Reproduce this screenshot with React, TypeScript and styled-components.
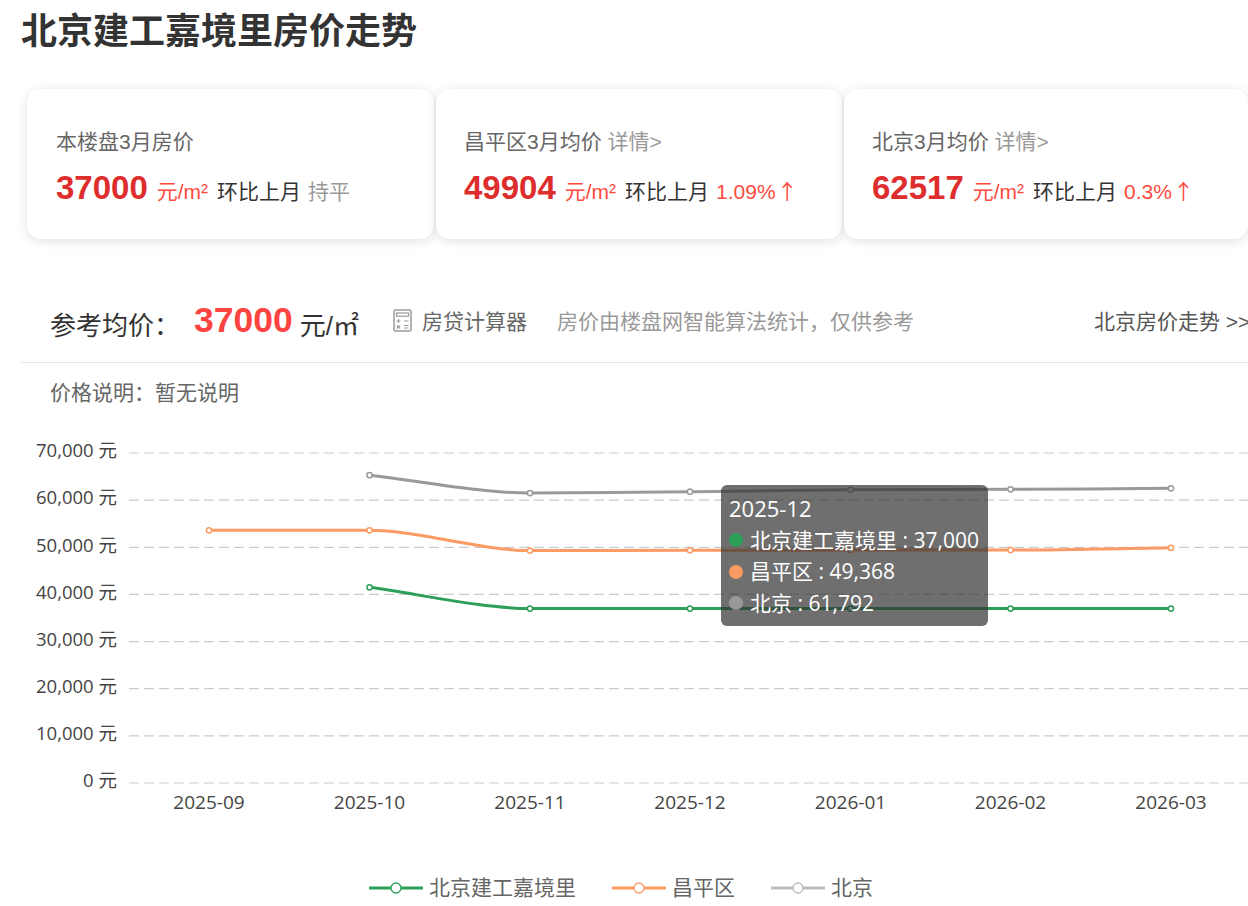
import React from "react";
import styled, { createGlobalStyle } from "styled-components";

const Global = createGlobalStyle`
  html, body { margin: 0; padding: 0; background: #fff; overflow: hidden; }
  body { font-family: "Liberation Sans", "Noto Sans CJK SC", sans-serif; }
  #root { width: 1248px; height: 906px; overflow: hidden; }
`;

const Page = styled.div`
  width: 1248px;
  height: 906px;
  overflow: hidden;
  padding-left: 21px;
  box-sizing: border-box;
`;
const Title = styled.h1`
  margin: 0;
  height: 62px;
  font-size: 36px;
  line-height: 63px;
  font-weight: 700;
  color: #333;
  white-space: nowrap;
`;
const Cards = styled.div`
  display: flex;
  gap: 2px;
  margin: 27px 0 0 6px;
  width: 1240px;
`;
const Card = styled.div<{ $w: number; $pad: number }>`
  flex: 0 0 ${(p) => p.$w}px;
  height: 150px;
  box-sizing: border-box;
  padding: 38px 0 0 ${(p) => p.$pad}px;
  background: #fff;
  border-radius: 14px;
  box-shadow: 0 2px 12px rgba(0, 0, 0, 0.12);
`;
const CardLabel = styled.div`
  font-size: 21px;
  line-height: 30px;
  color: #666;
  white-space: nowrap;
`;
const Detail = styled.span`
  color: #999;
`;
const CardValues = styled.div`
  display: flex;
  align-items: baseline;
  margin-top: 11px;
  white-space: nowrap;
`;
const Price = styled.span`
  font-size: 33px;
  line-height: 40px;
  font-weight: 700;
  color: #dd2d2d;
`;
const Unit = styled.span`
  font-size: 21px;
  color: #fd4a40;
  margin: 0 9px;
`;
const Compare = styled.span`
  font-size: 21px;
  color: #333;
`;
const Change = styled.span<{ $up?: boolean }>`
  font-size: 21px;
  margin-left: 7px;
  color: ${(p) => (p.$up ? "#fd4a40" : "#999")};
`;
const Arrow = styled.span`
  font-family: "Noto Sans CJK SC", sans-serif;
  font-size: 21px;
  margin-left: 1px;
`;

const Head = styled.div`
  display: flex;
  align-items: center;
  height: 86px;
  margin-top: 38px;
  padding: 3px 0 0 29px;
  width: 1260px;
  box-sizing: border-box;
  border-bottom: 1px solid #e6e6e6;
  white-space: nowrap;
`;
const RefLabel = styled.span`
  font-size: 26px;
  color: #333;
  margin-top: 4px;
`;
const RefPrice = styled.span`
  font-size: 35.5px;
  font-weight: 700;
  color: #fd4440;
  margin: -1px 0 0 14px;
`;
const RefUnit = styled.span`
  font-size: 26px;
  color: #333;
  margin: 4px 0 0 7px;
`;
const Calc = styled.span`
  display: inline-flex;
  align-items: center;
  margin: -2px 0 0 34px;
  font-size: 21px;
  color: #666;
  gap: 10px;
`;
const Note = styled.span`
  font-size: 21px;
  color: #999;
  margin: -2px 0 0 30px;
`;
const TrendLink = styled.span`
  font-size: 21px;
  color: #555;
  margin: -2px 0 0 180px;
`;
const Explain = styled.div`
  padding: 15px 0 0 29px;
  font-size: 21px;
  line-height: 30px;
  color: #666;
`;

const ChartWrap = styled.div`
  position: relative;
  width: 1248px;
  height: 420px;
  margin: 0 0 0 -21px;
`;
const ChartSvg = styled.svg`
  display: block;
  width: 1248px;
  height: 420px;
  font-family: "Open Sans", "Noto Sans CJK SC", sans-serif;
`;
const Tooltip = styled.div`
  position: absolute;
  left: 721px;
  top: 77px;
  width: 267px;
  height: 141px;
  box-sizing: border-box;
  padding: 8px 0 0 8px;
  border-radius: 6px;
  background: rgba(50, 50, 50, 0.7);
  color: #fff;
  font: 21px/31.5px "Open Sans", "Noto Sans CJK SC", sans-serif;
  white-space: nowrap;
`;
const TipDate = styled.div`
  font-size: 22px;
`;
const TipRow = styled.div`
  display: flex;
  align-items: center;
`;
const TipDot = styled.i<{ $c: string }>`
  flex: none;
  width: 14px;
  height: 14px;
  margin-right: 7px;
  border-radius: 50%;
  background: ${(p) => p.$c};
`;

const Legend = styled.div`
  position: absolute;
  left: 369px;
  top: 465px;
  display: flex;
  gap: 36px;
  font-size: 21px;
  line-height: 30px;
  color: #666;
  white-space: nowrap;
`;
const LegendItem = styled.div`
  display: flex;
  align-items: center;
  gap: 6px;
`;

const TOP = 408; // page y of the chart's origin
const X = [209, 369.5, 530, 690, 850.5, 1010.5, 1171];
const yOf = (v: number) => 783 - TOP - (v / 70000) * 330;
const LABEL_Y = [451, 498, 546, 593, 640, 687, 734, 781];
const TICKS = [70000, 60000, 50000, 40000, 30000, 20000, 10000, 0];
const MONTHS = ["2025-09", "2025-10", "2025-11", "2025-12", "2026-01", "2026-02", "2026-03"];

const SERIES = [
  { c: "#2d9f59", data: [null, 41500, 37000, 37000, 37000, 37000, 37000] },
  { c: "#fc9a63", data: [53600, 53600, 49300, 49368, 49400, 49400, 49904] },
  { c: "#999999", data: [null, 65300, 61500, 61792, 62200, 62300, 62517] },
];

// Slope at a point: flat at a local turn or a near-flat neighbour, otherwise the neighbours' chord.
function slopes(pts: [number, number][]) {
  return pts.map((p, i) => {
    const a = pts[i - 1];
    const b = pts[i + 1];
    if (!a) return (b[1] - p[1]) / (b[0] - p[0]);
    if (!b) return (p[1] - a[1]) / (p[0] - a[0]);
    const d0 = (p[1] - a[1]) / (p[0] - a[0]);
    const d1 = (b[1] - p[1]) / (b[0] - p[0]);
    if (d0 * d1 <= 0 || Math.abs(d0) < 0.01 || Math.abs(d1) < 0.01) return 0;
    return (d0 + d1) / 2;
  });
}

function smooth(pts: [number, number][]) {
  const m = slopes(pts);
  let d = `M${pts[0][0]} ${pts[0][1]}`;
  for (let i = 1; i < pts.length; i++) {
    const [x0, y0] = pts[i - 1];
    const [x1, y1] = pts[i];
    const k = (x1 - x0) * 0.3;
    d += ` C${x0 + k} ${y0 + m[i - 1] * k} ${x1 - k} ${y1 - m[i] * k} ${x1} ${y1}`;
  }
  return d;
}

const Line = ({ c, data }: { c: string; data: (number | null)[] }) => {
  const pts = data
    .map((v, i) => (v == null ? null : ([X[i], yOf(v)] as [number, number])))
    .filter(Boolean) as [number, number][];
  return (
    <g>
      <path d={smooth(pts)} fill="none" stroke={c} strokeWidth={3} />
      {pts.map(([x, y]) => (
        <circle key={x} cx={x} cy={y} r={2.6} fill="#fff" stroke={c} strokeWidth={1.5} />
      ))}
    </g>
  );
};

const LegendKey = ({ c }: { c: string }) => (
  <svg width="54" height="14" viewBox="0 0 54 14">
    <rect x="0" y="5.5" width="54" height="3" fill={c} />
    <circle cx="27" cy="7" r="5" fill="#fff" stroke={c} strokeWidth="1.3" />
  </svg>
);

const CalcIcon = () => (
  <svg width="19" height="23" viewBox="0 0 19 23" fill="none" stroke="#9a9a9a" strokeWidth="1.5">
    <rect x="1" y="1" width="17" height="21" rx="1.5" />
    <rect x="3.5" y="4" width="12" height="3.2" strokeWidth="1.2" />
    <path d="M3.5 12h4M5.5 10v4M11 12h4.5M11 16.5h4.5M11 19h4.5M3.8 16.5l3.4 3M7.2 16.5l-3.4 3" strokeWidth="1.2" />
  </svg>
);

const Stat = ({ label, detail, price, change, up }: { label: string; detail?: boolean; price: string; change: string; up?: boolean }) => (
  <>
    <CardLabel>
      {label}
      {detail && <Detail> 详情&gt;</Detail>}
    </CardLabel>
    <CardValues>
      <Price>{price}</Price>
      <Unit>元/m²</Unit>
      <Compare>环比上月</Compare>
      <Change $up={up}>
        {change}
        {up && <Arrow>↑</Arrow>}
      </Change>
    </CardValues>
  </>
);

export default function App() {
  return (
    <Page>
      <Global />
      <Title>北京建工嘉境里房价走势</Title>
      <Cards>
        <Card $w={407} $pad={29}>
          <Stat label="本楼盘3月房价" price="37000" change="持平" />
        </Card>
        <Card $w={406} $pad={28}>
          <Stat label="昌平区3月均价" detail price="49904" change="1.09%" up />
        </Card>
        <Card $w={404} $pad={28}>
          <Stat label="北京3月均价" detail price="62517" change="0.3%" up />
        </Card>
      </Cards>
      <Head>
        <RefLabel>参考均价：</RefLabel>
        <RefPrice>37000</RefPrice>
        <RefUnit>元/㎡</RefUnit>
        <Calc>
          <CalcIcon />
          房贷计算器
        </Calc>
        <Note>房价由楼盘网智能算法统计，仅供参考</Note>
        <TrendLink>北京房价走势 &gt;&gt;</TrendLink>
      </Head>
      <Explain>价格说明：暂无说明</Explain>
      <ChartWrap>
        <ChartSvg viewBox="0 0 1248 420">
          {TICKS.map((t, i) => (
            <g key={t}>
              <line
                x1="129"
                x2="1248"
                y1={yOf(t)}
                y2={yOf(t)}
                stroke="#ccc"
                strokeWidth="1.2"
                strokeDasharray="10 5"
              />
              <text x="117" y={LABEL_Y[i] - TOP + 6} textAnchor="end" fontSize="18.5" fill="#444">
                {t.toLocaleString("en-US")} 元
              </text>
            </g>
          ))}
          {MONTHS.map((m, i) => (
            <text key={m} x={X[i]} y={809 - TOP} textAnchor="middle" fontSize="19" fill="#444">
              {m}
            </text>
          ))}
          {SERIES.map((s) => (
            <Line key={s.c} c={s.c} data={s.data} />
          ))}
        </ChartSvg>
        <Tooltip>
          <TipDate>2025-12</TipDate>
          <TipRow>
            <TipDot $c="#2d9f59" />
            北京建工嘉境里 : 37,000
          </TipRow>
          <TipRow>
            <TipDot $c="#fc9a63" />
            昌平区 : 49,368
          </TipRow>
          <TipRow>
            <TipDot $c="#999999" />
            北京 : 61,792
          </TipRow>
        </Tooltip>
        <Legend>
          <LegendItem>
            <LegendKey c="#2d9f59" />
            北京建工嘉境里
          </LegendItem>
          <LegendItem>
            <LegendKey c="#fc9a63" />
            昌平区
          </LegendItem>
          <LegendItem>
            <LegendKey c="#bbbbbb" />
            北京
          </LegendItem>
        </Legend>
      </ChartWrap>
    </Page>
  );
}
